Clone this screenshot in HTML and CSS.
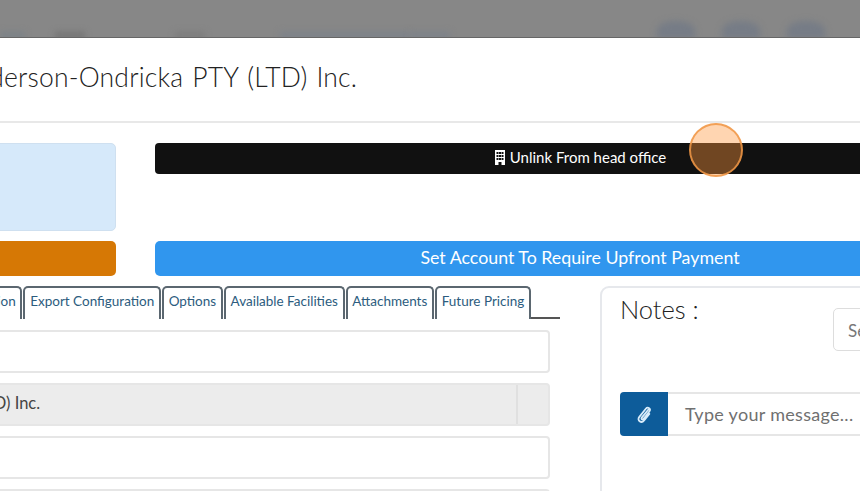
FILE: index.html
```html
<!DOCTYPE html>
<html lang="en">
<head>
    <meta charset="UTF-8">
    <title>Account</title>
    <link rel="stylesheet" href="styles.css">
</head>
<body>
    <div class="topbar">
        <span class="blob blob-a"></span>
        <span class="blob blob-b"></span>
        <span class="blob blob-c"></span>
        <span class="blob blob-d"></span>
        <span class="blob blob-e"></span>
        <span class="blob blob-f"></span>
        <span class="blob blob-f"></span>
        <span class="blob blob-f"></span>
    </div>
    <div class="modal">
        <div class="modal-head">
            <h1 class="modal-title">Anderson-Ondricka PTY (LTD) Inc.</h1>
        </div>
        <div class="actions">
            <div class="left-actions">
                <div class="info-box"></div>
                <div class="btn btn-orange"></div>
            </div>
            <div class="right-actions">
                <div class="btn-black">
                    <svg class="icon-building" viewBox="0 0 12 15" width="12" height="15">
                        <path fill="#fff" fill-rule="evenodd" d="M1 0h10v15H7.500v-3h-3v3H1zM2.500 2v2h2V2zM5 2v2h2V2zM7.500 2v2h2V2zM2.500 5v2h2V5zM5 5v2h2V5zM7.500 5v2h2V5zM2.500 8v2h2V8zM5 8v2h2V8zM7.500 8v2h2V8z"/>
                    </svg>
                    Unlink From head office
                </div>
                <div class="btn btn-blue">Set Account To Require Upfront Payment</div>
            </div>
        </div>
        <div class="lower">
            <div class="details">
                <div class="tabs">
                    <div class="tab">Integration</div>
                    <div class="tab">Export Configuration</div>
                    <div class="tab">Options</div>
                    <div class="tab">Available Facilities</div>
                    <div class="tab">Attachments</div>
                    <div class="tab">Future Pricing</div>
                    <div class="tabs-rest"></div>
                </div>
                <div class="field"></div>
                <div class="field field-locked">
                    <span class="field-text">Anderson-Ondricka PTY (LTD) Inc.</span>
                    <span class="field-addon"></span>
                </div>
                <div class="field"></div>
                <div class="field"></div>
            </div>
            <div class="notes">
                <div class="notes-head">
                    <h2 class="notes-title">Notes :</h2>
                    <div class="notes-search">Search</div>
                </div>
                <div class="message-row">
                    <div class="attach-btn">
                        <svg viewBox="0 0 16 18" width="18" height="20">
                            <path fill="none" stroke="#d8ecfa" stroke-width="1.600" stroke-linecap="round" d="M11.800 5.200 6 12.300c-.9 1.100.6 2.300 1.500 1.200l5.300-6.700c1.800-2.300-1.300-4.800-3.200-2.500L3.800 11.600c-2.500 3.200 1.800 6.300 4.300 3.200l4.700-5.900"/>
                        </svg>
                    </div>
                    <div class="message-input">Type your message...</div>
                </div>
            </div>
        </div>
    </div>
    <div class="highlight"></div>
</body>
</html>
```

FILE: styles.css
```css
body {
    margin: 0;
    height: 491px;
    overflow: hidden;
    background-color: #868686;
    font-family: "Lato", "Liberation Sans", sans-serif;
    color: #333;
}
.topbar {
    height: 37px;
    border-bottom: 1px solid #666;
    display: flex;
    align-items: flex-end;
    overflow: hidden;
    background-color: #878787;
}
.blob {
    height: 7px;
    margin-bottom: -2px;
    filter: blur(3px);
}
.blob-a { width: 25px; background-color: #7b8288; }
.blob-b { width: 30px; margin-left: 30px; background-color: #747474; }
.blob-c { width: 30px; margin-left: 90px; background-color: #7c7c7c; }
.blob-d { width: 130px; margin-left: 75px; background-color: #7c828a; }
.blob-e { width: 40px; background-color: #7c828a; }
.blob-f {
    width: 38px;
    height: 18px;
    margin-left: 27px;
    border-radius: 50% 50% 0 0;
    background-color: #767c86;
}
.blob-e + .blob-f { margin-left: 207px; }
.modal {
    width: 1300px;
    margin-left: -200px;
    height: 453px;
    background-color: #fff;
    overflow: hidden;
}
.modal-head {
    height: 83px;
    border-bottom: 2px solid #e8e8e8;
    display: flex;
    align-items: center;
    padding-left: 157px;
}
.modal-title {
    margin: 0 0 6px;
    font-size: 26.500px;
    font-weight: 300;
    letter-spacing: 0.200px;
    word-spacing: 1.500px;
    color: #222;
    white-space: nowrap;
}
.actions {
    display: flex;
    gap: 39px;
    padding-top: 20px;
}
.left-actions {
    width: 316px;
    display: flex;
    flex-direction: column;
    gap: 10px;
}
.right-actions {
    flex: 1;
    display: flex;
    flex-direction: column;
    gap: 67px;
}
.info-box {
    height: 88px;
    background-color: #d6e9fa;
    border: 1px solid #cfe0f0;
    border-radius: 5px;
    box-sizing: border-box;
}
.btn {
    height: 35px;
    border-radius: 5px;
    display: flex;
    align-items: center;
    justify-content: center;
    color: #fff;
    font-size: 17.800px;
}
.btn-orange { background-color: #d67805; }
.btn-blue {
    background-color: #3096ee;
    width: 850px;
    padding-bottom: 3px;
    box-sizing: border-box;
}
.btn-black {
    height: 31px;
    width: 850px;
    border-radius: 4px;
    background-color: #111;
    color: #fff;
    font-size: 15px;
    display: flex;
    align-items: center;
    justify-content: center;
    gap: 4px;
    padding-bottom: 3px;
    box-sizing: border-box;
}
.lower {
    display: flex;
    gap: 40px;
    padding-top: 10px;
}
.details {
    width: 760px;
}
.tabs {
    display: flex;
    justify-content: flex-end;
    height: 33px;
    gap: 1px;
    margin-bottom: 11px;
}
.tab {
    border: 2px solid #5b6770;
    border-bottom: none;
    border-radius: 5px 5px 0 0;
    padding: 5px 4.700px 0;
    font-size: 13.500px;
    color: #2c5c7e;
    white-space: nowrap;
}
.tabs-rest {
    width: 29px;
    margin-left: -1px;
    border-bottom: 2px solid #555;
}
.field {
    height: 43px;
    margin-right: 10px;
    margin-bottom: 10px;
    border: 2px solid #e6e6e6;
    border-radius: 4px;
    box-sizing: border-box;
    background-color: #fff;
    display: flex;
    align-items: stretch;
}
.field-locked {
    background-color: #ececec;
}
.field-text {
    flex: 1;
    align-self: center;
    margin-left: -9px;
    margin-bottom: 3px;
    font-size: 16.500px;
    color: #444;
    white-space: nowrap;
}
.field-addon {
    width: 30px;
    border-left: 2px solid #e0e0e0;
}
.notes {
    flex: 1;
    height: 300px;
    border: 2px solid #e6e8ec;
    border-radius: 9px;
    padding: 0 18px;
}
.notes-head {
    display: flex;
    height: 104px;
    gap: 135px;
}
.notes-title {
    margin: 6px 0 0;
    font-size: 25.500px;
    font-weight: 300;
    color: #222;
    width: 78px;
    white-space: nowrap;
}
.notes-search {
    margin-top: 20px;
    width: 200px;
    height: 43px;
    border: 1px solid #ddd;
    border-radius: 5px;
    padding: 11px 14px;
    box-sizing: border-box;
    font-size: 17px;
    color: #777;
}
.message-row {
    display: flex;
    height: 44px;
}
.attach-btn {
    width: 48px;
    background-color: #0d5c9a;
    border-radius: 4px 0 0 4px;
    display: flex;
    align-items: center;
    justify-content: center;
}
.message-input {
    width: 400px;
    border: 2px solid #e6e6e6;
    border-left: none;
    padding: 9px 17px;
    box-sizing: border-box;
    font-size: 18px;
    letter-spacing: 0.300px;
    color: #707070;
    white-space: nowrap;
}
.highlight {
    position: absolute;
    left: 689px;
    top: 123px;
    width: 54px;
    height: 54px;
    box-sizing: border-box;
    border: 2px solid rgba(240, 150, 70, 0.85);
    border-radius: 50%;
    background-color: rgba(255, 150, 60, 0.4);
}
```
